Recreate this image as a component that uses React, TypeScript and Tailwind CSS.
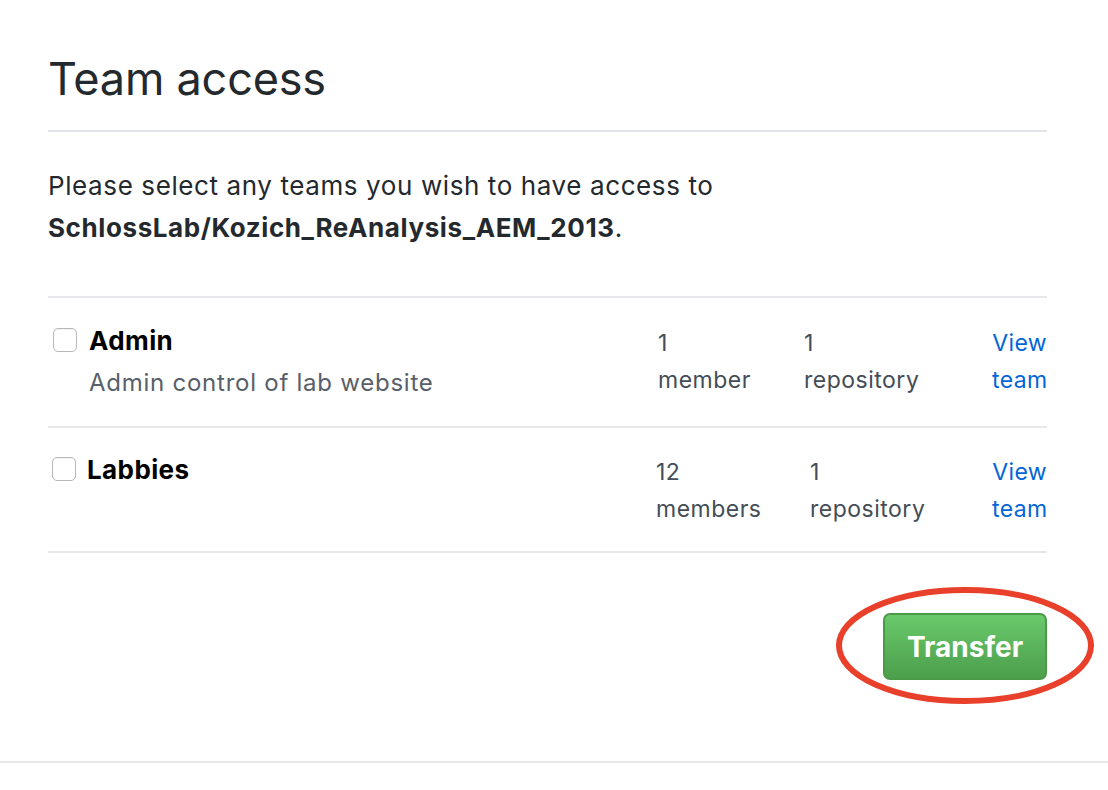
import React from "react";

const font = { fontFamily: "Inter, 'Noto Sans', sans-serif" };

function Checkbox() {
  return (
    <span className="inline-block w-[24px] h-[24px] shrink-0 rounded-[5px] border border-[#b8b8b8] bg-white shadow-[inset_0_1px_1px_rgba(0,0,0,0.06)]" />
  );
}

function Row({
  name,
  desc,
  members,
  memberLabel,
  memberW,
  repoW,
  nameGap,
  cbOffset,
  pad,
}: {
  name: string;
  desc?: string;
  members: string;
  memberLabel: string;
  memberW: string;
  repoW: string;
  nameGap: string;
  cbOffset: string;
  pad: string;
}) {
  return (
    <div className={`flex items-start border-b-2 border-[#e6e8ec] ${pad}`}>
      <div className={`flex flex-1 items-start ${cbOffset}`}>
        <Checkbox />
        <div className={nameGap}>
          <div className="text-[26px] leading-[26px] font-bold text-black tracking-[0.4px]">{name}</div>
          {desc ? (
            <div className="text-[24px] leading-[26px] mt-[16px] text-[#586069] tracking-[0.75px]">{desc}</div>
          ) : null}
        </div>
      </div>
      <div className={`${memberW} text-[23px] leading-[37px] text-[#444d56] -mt-[3px] tracking-[0.5px]`}>
        <div>{members}</div>
        <div>{memberLabel}</div>
      </div>
      <div className={`${repoW} text-[23px] leading-[37px] text-[#444d56] -mt-[3px] tracking-[0.5px]`}>
        <div>1</div>
        <div>repository</div>
      </div>
      <div className="w-[55px] text-[23px] leading-[37px] text-[#0366d6] text-right -mt-[3px] tracking-[0.4px]">
        <div>View</div>
        <div>team</div>
      </div>
    </div>
  );
}

export default function App() {
  return (
    <div className="w-[1108px] h-[790px] bg-white relative overflow-hidden" style={font}>
      <div className="ml-[48px] w-[999px]">
        <h1 className="pt-[54px] pb-[26px] text-[45px] leading-[50px] font-normal text-[#24292e] tracking-[-0.2px] border-b-2 border-[#e1e4e8]">
          Team access
        </h1>
        <p className="mt-[33px] text-[26px] leading-[42px] text-[#24292e] tracking-[0.6px]">
          Please select any teams you wish to have access to
          <br />
          <strong className="font-bold">SchlossLab/Kozich_ReAnalysis_AEM_2013</strong>.
        </p>
        <div className="mt-[47px] border-t-2 border-[#e6e8ec]">
          <Row
            name="Admin"
            desc="Admin control of lab website"
            members="1"
            memberLabel="member"
            memberW="w-[146px]"
            repoW="w-[188px]"
            nameGap="ml-[12px]"
            cbOffset="ml-[5px]"
            pad="pt-[30px] pb-[27px]"
          />
          <Row
            name="Labbies"
            members="12"
            memberLabel="members"
            memberW="w-[154px]"
            repoW="w-[182px]"
            nameGap="ml-[11px]"
            cbOffset="ml-[4px]"
            pad="pt-[29px] pb-[23px]"
          />
        </div>
        <div className="flex justify-end mt-[60px]">
          <button className="relative w-[164px] h-[67px] rounded-[7px] border-2 border-[#4a9a48] bg-gradient-to-b from-[#6ac96b] to-[#4c9f4c] text-white text-[28px] font-bold">
            Transfer
            <svg
              className="absolute pointer-events-none"
              style={{ left: -49, top: -28 }}
              width="258"
              height="117"
              viewBox="0 0 258 117"
            >
              <ellipse cx="129" cy="58.5" rx="126" ry="55.5" fill="none" stroke="#e8402a" strokeWidth="6" />
            </svg>
          </button>
        </div>
      </div>
      <div className="absolute left-0 right-0 top-[761px] border-t-2 border-[#e6e8ec]" />
    </div>
  );
}
